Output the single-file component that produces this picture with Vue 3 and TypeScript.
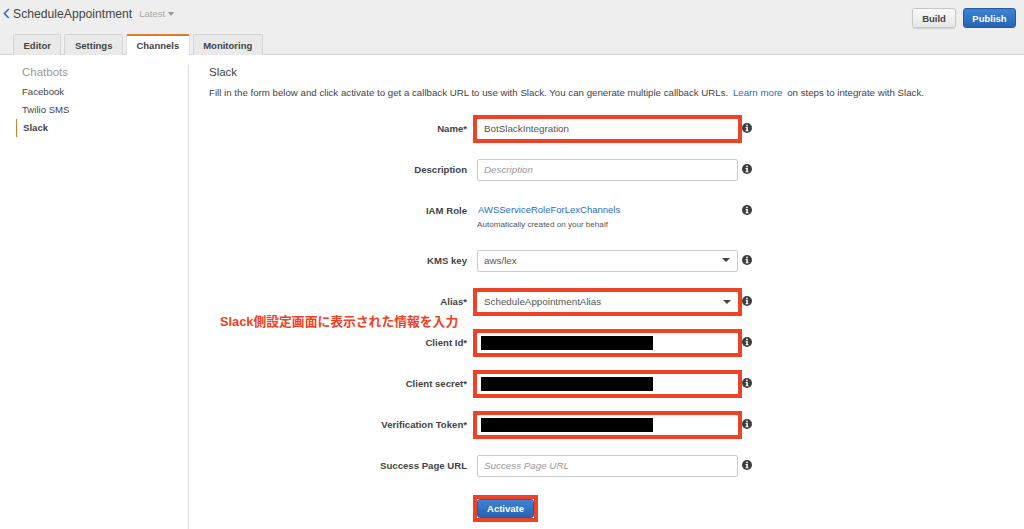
<script setup lang="ts">
type Field = {
  label: string
  kind: 'input' | 'select' | 'secret' | 'iam'
  value?: string
  placeholder?: string
  marked?: boolean
}

const tabs = ['Editor', 'Settings', 'Channels', 'Monitoring']
const bots = ['Facebook', 'Twilio SMS', 'Slack']

const fields: Field[] = [
  { label: 'Name*', kind: 'input', value: 'BotSlackIntegration', marked: true },
  { label: 'Description', kind: 'input', placeholder: 'Description' },
  { label: 'IAM Role', kind: 'iam' },
  { label: 'KMS key', kind: 'select', value: 'aws/lex' },
  { label: 'Alias*', kind: 'select', value: 'ScheduleAppointmentAlias', marked: true },
  { label: 'Client Id*', kind: 'secret', marked: true },
  { label: 'Client secret*', kind: 'secret', marked: true },
  { label: 'Verification Token*', kind: 'secret', marked: true },
  { label: 'Success Page URL', kind: 'input', placeholder: 'Success Page URL' },
]
</script>

<template>
  <div class="page">
    <header class="top">
      <div class="top-row">
        <div class="title">
          <svg class="back" width="7" height="11" viewBox="0 0 7 11" aria-hidden="true">
            <path d="M5.8 1 1.4 5.5l4.4 4.5" fill="none" stroke="#2f6fc0" stroke-width="1.6" />
          </svg>
          <span class="bot-name">ScheduleAppointment</span>
          <span class="version">Latest</span>
          <span class="caret caret--light" />
        </div>
        <div class="actions">
          <button class="btn btn--plain" type="button">Build</button>
          <button class="btn btn--blue" type="button">Publish</button>
        </div>
      </div>
      <nav class="tabs">
        <span
          v-for="tab in tabs"
          :key="tab"
          class="tab"
          :class="{ 'tab--active': tab === 'Channels' }"
        >{{ tab }}</span>
      </nav>
    </header>

    <div class="body">
      <aside class="side">
        <h2 class="side-title">Chatbots</h2>
        <a
          v-for="bot in bots"
          :key="bot"
          class="side-link"
          :class="{ 'side-link--active': bot === 'Slack' }"
        >{{ bot }}</a>
      </aside>

      <main class="main">
        <h1 class="main-title">Slack</h1>
        <p class="intro">
          Fill in the form below and click activate to get a callback URL to use with Slack. You can generate multiple callback URLs.
          <a class="link learn">Learn more</a>
          on steps to integrate with Slack.
        </p>

        <form class="form" @submit.prevent>
          <div
            v-for="field in fields"
            :key="field.label"
            class="row"
            :class="{ 'row--iam': field.kind === 'iam' }"
          >
            <label class="label">{{ field.label }}</label>

            <div v-if="field.kind === 'iam'" class="iam">
              <a class="link iam-link">AWSServiceRoleForLexChannels</a>
              <span class="iam-note">Automatically created on your behalf</span>
            </div>
            <div v-else class="control" :class="{ 'control--marked': field.marked }">
              <span v-if="field.kind === 'secret'" class="redacted" />
              <span v-else-if="field.value" class="value">{{ field.value }}</span>
              <span v-else class="placeholder">{{ field.placeholder }}</span>
              <span v-if="field.kind === 'select'" class="caret caret--dark" />
            </div>

            <svg class="info" viewBox="0 0 10 10" aria-hidden="true">
              <circle cx="5" cy="5" r="5" fill="#3d3d3d" />
              <rect x="4.2" y="1.7" width="1.6" height="1.5" fill="#fff" />
              <path d="M3.6 4.1h2.2v3.2h.7v1H3.6v-1h.7V5.1h-.7z" fill="#fff" />
            </svg>
          </div>

          <div class="row row--submit">
            <span />
            <div class="submit-wrap">
              <button class="btn btn--blue btn--activate" type="button">Activate</button>
            </div>
          </div>

          <p class="note">Slack側設定画面に表示された情報を入力</p>
        </form>
      </main>
    </div>
  </div>
</template>

<style scoped>
.page {
  width: 1024px;
  height: 529px;
  overflow: hidden;
  background: #fff;
  color: #444;
  font-family: "Liberation Sans", Arial, sans-serif;
  font-size: 11px;
}

.top {
  height: 55px;
  box-sizing: border-box;
  background: #eee;
  border-bottom: 1px solid #d5d5d5;
  display: flex;
  flex-direction: column;
  justify-content: space-between;
}

.top-row {
  display: flex;
  justify-content: space-between;
  padding: 6px 8px 0 3px;
}

.title {
  display: flex;
  align-items: center;
  height: 15px;
}

.back {
  margin-right: 3px;
}

.bot-name {
  font-size: 12.2px;
  color: #444;
}

.version {
  margin-left: 7px;
  font-size: 9.5px;
  color: #aaa;
}

.caret {
  width: 0;
  height: 0;
  border-left: 4px solid transparent;
  border-right: 4px solid transparent;
}

.caret--light {
  margin-left: 3px;
  border-left-width: 3.5px;
  border-right-width: 3.5px;
  border-top: 4px solid #999;
}

.caret--dark {
  margin-left: auto;
  border-top: 4px solid #444;
}

.actions {
  display: flex;
  gap: 7px;
  margin-top: 2px;
}

.btn {
  height: 20px;
  box-sizing: border-box;
  padding: 0;
  border-radius: 3px;
  font-family: inherit;
  font-size: 9.5px;
  font-weight: 700;
}

.btn--plain {
  width: 44px;
  color: #444;
  background: linear-gradient(#fafafa, #e6e6e6);
  border: 1px solid #c6c6c6;
  box-shadow: 0 1px 1px rgba(0, 0, 0, 0.12);
}

.btn--blue {
  width: 53px;
  color: #fff;
  background: linear-gradient(#3f83d6, #2763b4);
  border: 1px solid #2a5a9e;
}

.tabs {
  display: flex;
  gap: 3px;
  padding-left: 13px;
  height: 21px;
  margin-bottom: -1px;
}

.tab {
  display: flex;
  align-items: center;
  justify-content: center;
  box-sizing: border-box;
  padding: 0 9.5px;
  background: #e9e9e9;
  border: 1px solid #d5d5d5;
  border-bottom: 0;
  border-radius: 2px 2px 0 0;
  font-size: 9.5px;
  font-weight: 700;
  color: #444;
}

.tab--active {
  background: #fff;
  border-color: #ddd;
  border-top: 2px solid #e07b26;
}

.body {
  display: flex;
  height: 474px;
}

.side {
  width: 189px;
  box-sizing: border-box;
  margin-top: 10px;
  padding: 0 0 0 22px;
  border-right: 1px solid #ddd;
  display: flex;
  flex-direction: column;
}

.side-title {
  margin: 0 0 3px;
  height: 15px;
  line-height: 15px;
  font-size: 11.5px;
  font-weight: 400;
  color: #999;
}

.side-link {
  height: 18px;
  line-height: 18px;
  font-size: 9.6px;
  color: #444;
}

.side-link--active {
  margin-left: -6px;
  padding-left: 6px;
  border-left: 1px solid #e07b26;
  font-weight: 700;
}

.main {
  flex: 1;
  padding: 10px 0 0 20px;
}

.main-title {
  margin: 0;
  height: 15px;
  line-height: 15px;
  font-size: 11.5px;
  font-weight: 400;
  color: #444;
}

.intro {
  margin: 6px 0 0;
  height: 14px;
  line-height: 14px;
  font-size: 9.7px;
  white-space: nowrap;
  color: #444;
}

.link {
  color: #2a6ebb;
}

.learn {
  margin: 0 2px;
}

.form {
  position: relative;
  margin-top: 18px;
}

.row {
  display: grid;
  grid-template-columns: 258px 261px 20px;
  column-gap: 10px;
  height: 41px;
  align-items: start;
}

.row--iam {
  height: 50px;
}

.row--submit {
  height: 30px;
  padding-top: 3px;
}

.label {
  height: 21px;
  line-height: 21px;
  text-align: right;
  font-size: 9.6px;
  font-weight: 700;
  color: #444;
}

.control {
  display: flex;
  align-items: center;
  box-sizing: border-box;
  height: 22px;
  padding: 0 7px 2px 6px;
  background: #fff;
  border: 1px solid #ccc;
  border-radius: 2px;
  font-size: 9.8px;
}

.control--marked {
  height: 20px;
  margin-top: 1px;
  padding: 0 7px 1px;
  border: 0;
  border-radius: 0;
  outline: 4px solid #ee4125;
}

.value {
  color: #555;
}

.placeholder {
  font-style: italic;
  color: #999;
}

.redacted {
  width: 172px;
  height: 14px;
  margin-left: -3px;
  background: #000;
}

.iam {
  display: flex;
  flex-direction: column;
  padding-left: 1px;
}

.iam-link {
  height: 20px;
  line-height: 20px;
  font-size: 9.5px;
}

.iam-note {
  margin-left: -1px;
  line-height: 10px;
  font-size: 8.1px;
  color: #555;
}

.info {
  width: 10px;
  height: 10px;
  margin: 5px 0 0 -6px;
}

.submit-wrap {
  width: 57px;
  outline: 4px solid #ee4125;
}

.btn--activate {
  display: block;
  width: 57px;
  height: 19px;
}

/* annotation laid over the form */
.note {
  position: absolute;
  left: 11px;
  top: 196px;
  margin: 0;
  font-family: "Liberation Sans", "Noto Sans CJK JP", sans-serif;
  font-size: 12.8px;
  font-weight: 700;
  line-height: 16px;
  color: #ee4125;
}
</style>
